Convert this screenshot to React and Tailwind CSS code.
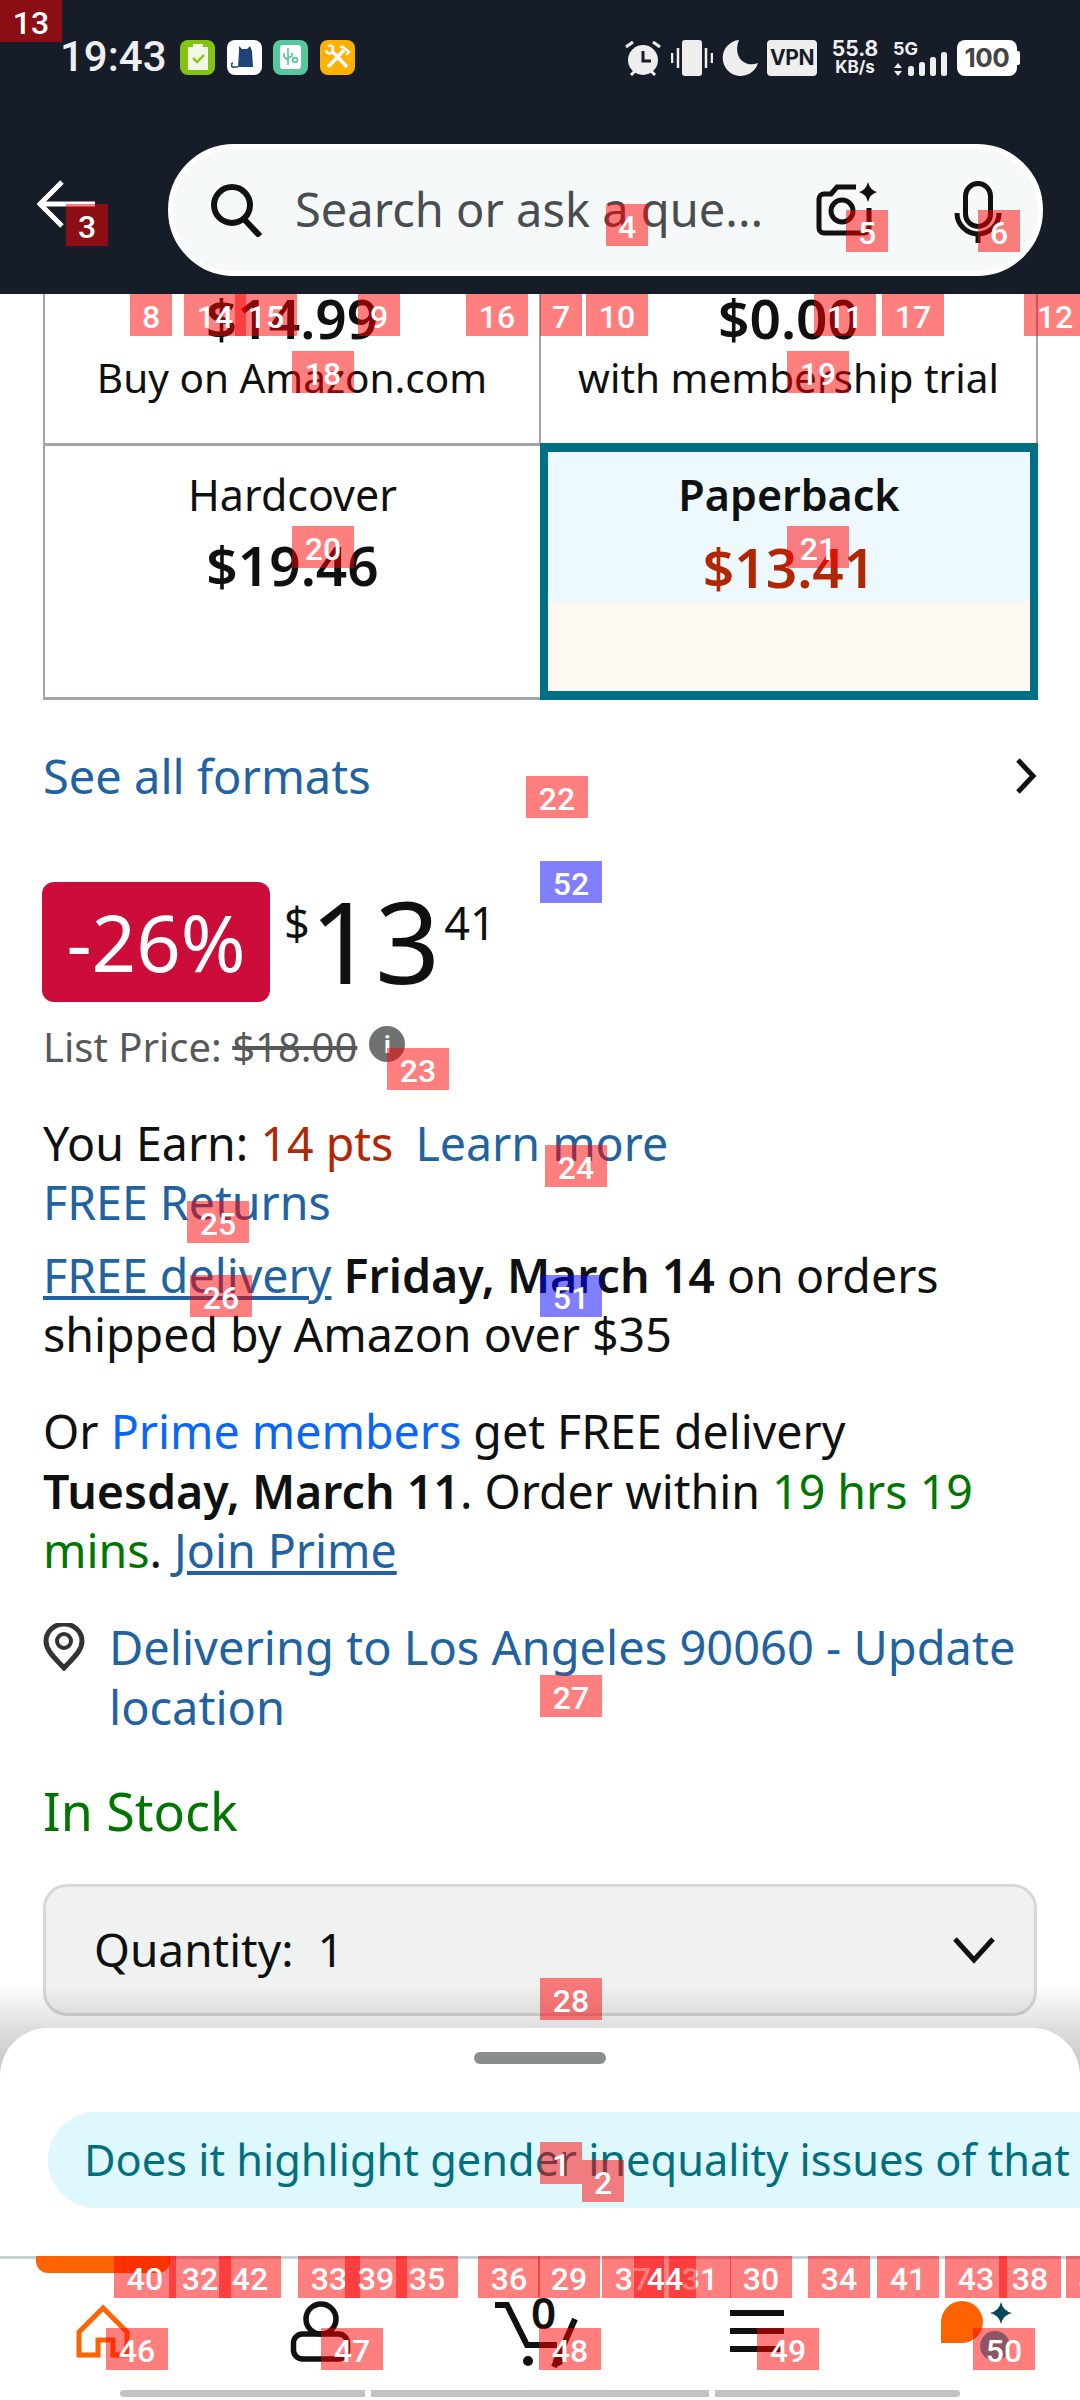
import React from 'react';

const BODY = "font-['Noto_Sans',sans-serif]";

// numbered overlay boxes: [n, x, y, blue?]
const MARKS = [
  [1, 540, 2142], [2, 582, 2160], [3, 66, 204], [4, 606, 204], [5, 846, 210], [6, 978, 210],
  [7, 540, 294], [8, 130, 294], [9, 358, 294], [10, 586, 294], [11, 814, 294], [12, 1024, 294],
  [13, 0, 0], [14, 184, 294], [15, 235, 294], [16, 466, 294], [17, 882, 294], [18, 292, 351],
  [19, 787, 351], [20, 292, 526], [21, 787, 526], [22, 526, 776], [23, 387, 1048], [24, 545, 1145],
  [25, 187, 1201], [26, 190, 1275], [27, 540, 1675], [28, 540, 1978], [29, 538, 2256], [30, 730, 2256],
  [31, 669, 2256], [32, 169, 2256], [33, 298, 2256], [34, 808, 2256], [35, 396, 2256], [36, 478, 2256],
  [37, 602, 2256], [38, 999, 2256], [39, 345, 2256], [40, 114, 2256], [41, 877, 2256], [42, 219, 2256],
  [43, 945, 2256], [44, 634, 2256], [45, 1066, 2256], [46, 106, 2328], [47, 321, 2328], [48, 539, 2328],
  [49, 757, 2328], [50, 973, 2328], [51, 540, 1275, true], [52, 540, 861, true],
];

function Marks() {
  return (
    <>
      {MARKS.map(([n, x, y, blue]) => (
        <div
          key={n}
          className={`absolute h-[42px] flex items-center justify-center text-white font-['Roboto',sans-serif] font-medium text-[32px] leading-none pt-1 ${blue ? 'bg-[#0000ff]/50' : 'bg-[#ff0000]/50'}`}
          style={{ left: x, top: y, width: n < 10 ? 42 : 62 }}
        >
          {n}
        </div>
      ))}
    </>
  );
}

function AppIcons() {
  return (
    <div className="flex gap-[11.5px] ml-[23px]">
      <div className="w-[35px] h-[35px] rounded-[8px] bg-[#85c313] flex items-center justify-center">
        <svg width="20" height="26" viewBox="0 0 20 26">
          <path d="M0 3h5V0h10v3h5v23H0z" fill="#f1f8e6" />
          <path d="M5 14l4 4 7-7" stroke="#85c313" strokeWidth="2.4" fill="none" />
        </svg>
      </div>
      <div className="w-[35px] h-[35px] rounded-[8px] bg-white flex items-center justify-center">
        <svg width="26" height="28" viewBox="0 0 26 28">
          <path d="M8 3l3 3h5l3-3 2 5 1 16H7l1-16z" fill="#1f4278" />
          <path d="M7 24H3a2 2 0 0 1-1-4" stroke="#1f4278" strokeWidth="1.6" fill="none" />
        </svg>
      </div>
      <div className="w-[35px] h-[35px] rounded-[8px] bg-[#55c99a] flex items-center justify-center">
        <div className="w-[21px] h-[24px] rounded-[3px] bg-white flex items-center justify-center">
          <svg width="16" height="18" viewBox="0 0 16 18">
            <path d="M5 0v17M1 5v4l4 3M9 5v3l-4 2" stroke="#55c99a" strokeWidth="1.6" fill="none" />
            <circle cx="12" cy="12" r="2.4" stroke="#55c99a" strokeWidth="1.6" fill="none" />
          </svg>
        </div>
      </div>
      <div className="w-[35px] h-[35px] rounded-[8px] bg-[#ffb000] flex items-center justify-center">
        <svg width="27" height="27" viewBox="0 0 27 27">
          <path d="M8 7l15 16M20 6L4 23" stroke="#fff" strokeWidth="3.6" fill="none" />
          <path d="M2 6a4 4 0 0 0 6 3l1-6a4 4 0 0 0-5-1M16 3l3 0 6 5-3 3" stroke="#fff" strokeWidth="2.4" fill="none" />
        </svg>
      </div>
    </div>
  );
}

function StatusRight() {
  return (
    <div className="flex items-center text-[#eeeeee] ml-auto mr-[60px]">
      {/* alarm */}
      <svg width="38" height="36" viewBox="0 0 38 36" className="mr-[9px]">
        <circle cx="19" cy="20" r="15" fill="#eee" />
        <path d="M19 11v10h8" stroke="#161d28" strokeWidth="3" fill="none" />
        <path d="M2 7l7-5M36 7l-7-5M7 35l4-4M31 35l-4-4" stroke="#eee" strokeWidth="3" fill="none" />
      </svg>
      {/* vibrate */}
      <svg width="42" height="36" viewBox="0 0 42 36" className="mr-[9px]">
        <rect x="11" y="0" width="20" height="36" rx="3" fill="#eee" />
        <path d="M1 13v10M7 8v20M35 8v20M41 13v10" stroke="#eee" strokeWidth="2.5" />
      </svg>
      {/* moon */}
      <svg width="36" height="36" viewBox="0 0 36 36" className="mr-[9px]">
        <path d="M17 0A18 18 0 1 0 36 23C24 28 10 18 17 0z" fill="#eee" />
      </svg>
      <div className="w-[50px] h-[36px] rounded-[4px] bg-[#eeeeee] text-[#161d28] flex items-center justify-center font-['Inter',sans-serif] font-bold text-[21px] tracking-[-0.5px] mr-[15px]">VPN</div>
      <div className="w-[46px] flex flex-col items-center font-['Inter',sans-serif] font-bold mr-[15px] whitespace-nowrap">
        <span className="text-[21px] leading-[20px]">55.8</span>
        <span className="text-[17px] leading-[17px]">KB/s</span>
      </div>
      <div className="w-[54px] h-[36px] relative mr-[10px]">
        <span className="absolute left-0 top-0 font-['Inter',sans-serif] font-bold text-[18px] leading-[17px]">5G</span>
        <svg width="54" height="36" viewBox="0 0 54 36" className="absolute inset-0">
          <path d="M5 23l4 5H1zM5 36l4-5H1z" fill="#eee" />
          <rect x="15" y="26" width="6" height="10" rx="2.5" fill="#eee" />
          <rect x="26" y="22" width="6" height="14" rx="2.5" fill="#eee" />
          <rect x="37" y="17" width="6" height="19" rx="2.5" fill="#eee" />
          <rect x="48" y="12" width="6" height="24" rx="2.5" fill="#eee" />
        </svg>
      </div>
      <div className="w-[60px] h-[36px] rounded-[8px] bg-white text-[#444444] flex items-center justify-center font-['Inter',sans-serif] font-bold text-[26px] tracking-[-0.5px]">100</div>
      <div className="w-[3px] h-[14px] bg-white rounded-r-[2px]" />
    </div>
  );
}

function Header() {
  return (
    <header className="h-[294px] bg-[#161d28] shrink-0">
      <div className="h-[144px] pt-[39px] flex items-start pl-[60px]">
        <div className="flex items-center h-[36px]">
          <span className="font-['Roboto',sans-serif] font-medium text-[42px] leading-none text-[#eeeeee] w-[97px] whitespace-nowrap">19:43</span>
          <AppIcons />
        </div>
        <StatusRight />
      </div>
      <div className="flex items-center h-[132px]">
        <svg width="60" height="50" viewBox="0 0 60 50" className="ml-[37px] mr-[71px] -mt-[12px]">
          <path d="M25 3L3 25l22 22M3 25h55" stroke="#fff" strokeWidth="5" fill="none" />
        </svg>
        <div className="w-[875px] h-[132px] rounded-full bg-[#f6f9fa] border-[5px] border-white flex items-center pl-[37px]">
          <svg width="54" height="54" viewBox="0 0 54 54" className="shrink-0">
            <circle cx="22" cy="22" r="18" stroke="#111" strokeWidth="6" fill="none" />
            <path d="M33 35l17 18" stroke="#111" strokeWidth="6" fill="none" />
          </svg>
          <span className={`${BODY} text-[47px] text-[#494d4f] ml-[31px] w-[516px] whitespace-nowrap -mt-[2px]`}>Search or ask a que...</span>
          <svg width="72" height="62" viewBox="0 0 72 62" className="shrink-0 ml-[2px]">
            <path d="M43 8H24l-6 7h-7a5 5 0 0 0-5 5v29a5 5 0 0 0 5 5h40a5 5 0 0 0 5-5V29" stroke="#111" strokeWidth="5" fill="none" />
            <circle cx="29" cy="32" r="11" stroke="#111" strokeWidth="5" fill="none" />
            <path d="M55 3q2 8 9 10q-7 2-9 10q-2-8-9-10q7-2 9-10z" fill="#111" />
          </svg>
          <svg width="56" height="66" viewBox="0 0 56 66" className="shrink-0 ml-[65px]">
            <rect x="15.5" y="6.5" width="25" height="43" rx="12.5" stroke="#111" strokeWidth="5" fill="none" />
            <path d="M7 36a21 21 0 0 0 42 0M28 57v9" stroke="#111" strokeWidth="5" fill="none" />
          </svg>
        </div>
      </div>
    </header>
  );
}

function Formats() {
  return (
    <div className={`${BODY} w-[995px] ml-[43px] grid grid-cols-[497px_498px] text-[#0f1111] text-center`}>
      <div className="h-[152px] border-l-[2px] border-r-[1px] border-b-[3px] border-[#a2a5ac] flex flex-col justify-end pb-[35px] overflow-hidden">
        <div className="font-semibold text-[55px] leading-[60px]">$14.99</div>
        <div className="text-[40.5px] leading-[60px]">Buy on Amazon.com</div>
      </div>
      <div className="h-[152px] border-l-[1px] border-r-[2px] border-b-[3px] border-[#a2a5ac] flex flex-col justify-end pb-[35px] overflow-hidden">
        <div className="font-semibold text-[55px] leading-[60px]">$0.00</div>
        <div className="text-[40.5px] leading-[60px]">with membership trial</div>
      </div>
      <div className="h-[254px] border-l-[2px] border-b-[3px] border-[#a2a5ac] flex flex-col pt-[21px]">
        <div className="text-[43px] leading-[56px]">Hardcover</div>
        <div className="font-semibold text-[55px] leading-[64px] mt-[10px]">$19.46</div>
      </div>
      <div className="h-[257px] -mt-[3px] border-[8px] border-t-[9px] border-b-[9px] border-[#007185] flex flex-col bg-[#fdf8f2]">
        <div className="h-[150px] bg-[#edf8ff] pt-[15px]">
          <div className="font-semibold text-[43px] leading-[56px]">Paperback</div>
          <div className="font-semibold text-[55px] leading-[64px] mt-[12px] text-[#b12704]">$13.41</div>
        </div>
      </div>
    </div>
  );
}

function Info() {
  return (
    <div className="w-[36px] h-[36px] rounded-full bg-[#6e7272] flex items-center justify-center text-white font-bold text-[24px] leading-none ml-[12px] -mt-[6px]">i</div>
  );
}

function Product() {
  return (
    <div className={`${BODY} px-[43px] text-[46.5px] text-[#0f1111]`}>
      <div className="flex items-center justify-between h-[60px] mt-[46px] text-[#2162a1] text-[47px]">
        <span>See all formats</span>
        <svg width="28" height="40" viewBox="0 0 28 40" className="mr-[-3px]">
          <path d="M6 4l15 16L6 36" stroke="#0f1111" strokeWidth="5" fill="none" />
        </svg>
      </div>

      <div className="flex mt-[76px] h-[120px] -ml-[1px]">
        <div className="w-[228px] rounded-[12px] bg-[#cc0c39] text-white text-[78px] flex items-center justify-center">-26%</div>
        <div className="relative flex items-start ml-[14px] mt-[12px]">
          <span className="text-[45px] leading-[58px]">$</span>
          <span className="text-[114px] leading-[110px] -mt-[9px] ml-0">13</span>
          <span className="text-[45px] leading-[58px] ml-[4px]">41</span>
        </div>
      </div>

      <div className="flex items-center text-[40px] leading-[50px] text-[#565959] mt-[20px]">
        <span>List Price:&nbsp;</span>
        <span className="line-through">$18.00</span>
        <Info />
      </div>

      <div className="mt-[42px] leading-[59px]">
        <div>
          You Earn: <span className="text-[#b12704]">14 pts</span>{' '}
          <span className="text-[#2162a1] ml-[10px]">Learn more</span>
        </div>
        <div className="text-[#2162a1]">FREE Returns</div>
      </div>

      <div className="mt-[14px] leading-[59px]">
        <span className="text-[#2162a1] underline">FREE delivery</span>{' '}
        <span className="font-semibold">Friday, March 14</span> on orders shipped by Amazon over $35
      </div>

      <div className="mt-[38px] leading-[59.5px]">
        Or <span className="text-[#0a66f5]">Prime members</span> get FREE delivery{' '}
        <span className="font-semibold">Tuesday, March 11</span>. Order within{' '}
        <span className="text-[#007600]">19 hrs 19 mins</span>.{' '}
        <span className="text-[#2162a1] underline">Join Prime</span>
      </div>

      <div className="mt-[36px] flex leading-[60px] text-[#2162a1] text-[47px]">
        <svg width="42" height="48" viewBox="0 0 42 48" className="shrink-0 mt-[6px]">
          <path d="M21 45C12 35 3 28 3 18a18 17 0 0 1 36 0c0 10-9 17-18 27z" fill="none" stroke="#333" strokeWidth="5" />
          <circle cx="21" cy="18" r="7" fill="none" stroke="#333" strokeWidth="4" />
        </svg>
        <span className="ml-[24px]">Delivering to Los Angeles 90060 - Update location</span>
      </div>

      <div className="mt-[44px] text-[52px] leading-[60px] text-[#007600]">In Stock</div>

      <div className="mt-[43px] h-[132px] rounded-[24px] bg-[#f0f2f2] border-[3px] border-[#d5d9d9] flex items-center justify-between pl-[48px] pr-[38px]">
        <span className="whitespace-pre text-[46px]">Quantity:  1</span>
        <svg width="44" height="30" viewBox="0 0 44 30">
          <path d="M3 4l19 21L41 4" stroke="#0f1111" strokeWidth="5" fill="none" />
        </svg>
      </div>
    </div>
  );
}

function Sheet() {
  return (
    <>
      <div className="absolute left-0 right-0 top-[1985px] h-[100px] bg-gradient-to-b from-transparent via-[#00000026] to-[#00000040]" />
      <div className="absolute left-0 right-0 top-[2028px] h-[228px] bg-white rounded-t-[48px] overflow-hidden">
        <div className="w-[132px] h-[12px] rounded-full bg-[#8a8d8e] mx-auto mt-[24px]" />
        <div className={`${BODY} ml-[48px] mt-[48px] w-[1100px] h-[96px] rounded-[48px] bg-[#dff8fe] text-[#00707f] text-[43.3px] flex items-center pl-[36px] whitespace-nowrap`}>
          Does it highlight gender inequality issues of that
        </div>
      </div>
    </>
  );
}

function BottomNav() {
  return (
    <nav className="relative h-[144px] shrink-0 bg-white border-t-[3px] border-[#c5d2d6]">
      <div className="absolute left-[36px] -top-[3px] w-[134px] h-[17px] bg-[#ff6200] rounded-b-[12px]" />
      <div className="h-[131px] relative">
        <svg width="54" height="56" viewBox="0 0 54 56" className="absolute left-[76px] top-[45px]">
          <path d="M3 51V28L27 4l24 24v23H37V36H22v15z" stroke="#ff6200" strokeWidth="5" fill="none" />
        </svg>
        <svg width="62" height="62" viewBox="0 0 62 62" className="absolute left-[290px] top-[42px]">
          <circle cx="31" cy="18" r="15" stroke="#111" strokeWidth="5.5" fill="none" />
          <rect x="3.5" y="33" width="54" height="25" rx="9" stroke="#111" strokeWidth="5.5" fill="none" />
        </svg>
        <svg width="95" height="75" viewBox="0 0 95 75" className="absolute left-[490px] top-[36px]">
          <path d="M5 10h12l20 40h30" stroke="#111" strokeWidth="6" fill="none" />
          <path d="M85 24L64 72" stroke="#111" strokeWidth="6" fill="none" />
          <circle cx="38" cy="66" r="5" fill="#111" />
          <circle cx="68" cy="66" r="5" fill="#111" />
        </svg>
        <span className={`${BODY} absolute left-[531px] top-[28px] text-[44px] leading-[50px] font-semibold text-[#111]`}>0</span>
        <div className="absolute left-[730px] top-[51px] w-[54px] flex flex-col gap-[12px]">
          <div className="h-[6px] bg-[#111]" />
          <div className="h-[6px] bg-[#111]" />
          <div className="h-[6px] bg-[#111]" />
        </div>
        <div className="absolute left-[941px] top-[42px] w-[42px] h-[42px] rounded-full rounded-bl-[3px] bg-[#ff6200]" />
        <svg width="24" height="24" viewBox="0 0 24 24" className="absolute left-[989px] top-[42px]">
          <path d="M12 1q2 9 11 11q-9 2-11 11q-2-9-11-11q9-2 11-11z" fill="#05485a" />
        </svg>
        <div className="absolute left-[980px] top-[72px] w-[30px] h-[30px] rounded-full bg-[#1daac4]" />
      </div>
      <div className="flex gap-[6px] ml-[120px]">
        <div className="w-[245px] h-[7px] bg-[#c2c2c2] rounded-l-full" />
        <div className="w-[338px] h-[7px] bg-[#c2c2c2]" />
        <div className="w-[245px] h-[7px] bg-[#c2c2c2] rounded-r-full" />
      </div>
    </nav>
  );
}

export default function App() {
  return (
    <div className="relative w-[1080px] h-[2400px] overflow-hidden bg-white flex flex-col">
      <main className="h-[2256px] shrink-0 overflow-hidden">
        <Header />
        <Formats />
        <Product />
      </main>
      <Sheet />
      <BottomNav />
      <Marks />
    </div>
  );
}
